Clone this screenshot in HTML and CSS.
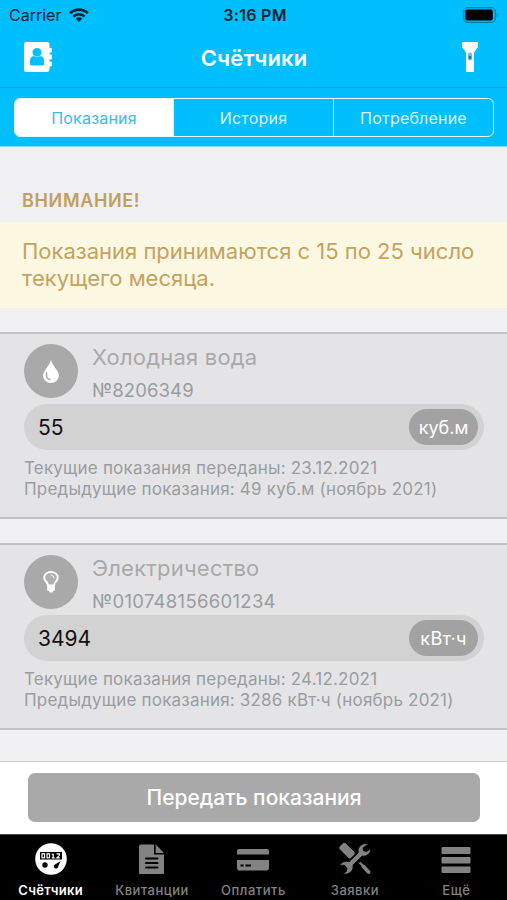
FILE: index.html
```html
<!DOCTYPE html>
<html lang="ru">
<head>
<meta charset="utf-8">
<meta name="viewport" content="width=device-width, initial-scale=1">
<title>Счётчики</title>
<link rel="stylesheet" href="styles.css">
</head>
<body>
<div class="app">
  <header class="top">
    <div class="status">
      <div class="carrier"><span>Carrier</span>
        <svg width="20" height="15" viewBox="0 0 20 15"><g fill="none" stroke="#07232d" stroke-width="2.700"><path d="M1.200 5.200a12.400 12.400 0 0 1 17.600 0"/><path d="M4.400 8.600a7.900 7.900 0 0 1 11.200 0"/></g><path fill="#07232d" d="M6.800 10.700a4.500 4.500 0 0 1 6.400 0L10 14z"/></svg>
      </div>
      <span class="time">3:16 PM</span>
      <svg class="battery" width="37" height="16" viewBox="0 0 37 16"><rect x=".7" y=".7" width="31.600" height="14.600" rx="4" fill="none" stroke="#087da3" stroke-width="1.300"/><rect x="2.400" y="2.600" width="27.400" height="10.800" rx="2" fill="#000"/><path d="M33.800 5.500q2.400 2.500 0 5z" fill="#087da3"/></svg>
    </div>
    <div class="nav">
      <svg width="29" height="30" viewBox="0 0 29 30"><path fill="#fff" fill-rule="evenodd" d="M2.500 0H23q2.500 0 2.500 2.500V6H27q1 0 1 1V9.500q0 1-1 1h-1.500v2H27q1 0 1 1V16.500q0 1-1 1h-1.500v2H27q1 0 1 1V23.500q0 1-1 1h-1.500v3Q25.500 30 23 30H2.500Q0 30 0 27.500v-25Q0 0 2.500 0zM13 6a4.600 4.600 0 0 0-3.200 7.900Q6 14.500 6 19v3q0 1.500 1.500 1.500h11Q20 23.500 20 22v-3q0-4.500-3.800-5.100A4.600 4.600 0 0 0 13 6z"/><path d="M9.300 13.600q3.700 3 7.400 0" fill="none" stroke="#9fe3fb" stroke-width=".8"/></svg>
      <h1>Счётчики</h1>
      <svg class="torch" width="16" height="30" viewBox="0 0 16 30"><path fill="#fff" d="M.8 0h14.400q.8 0 .8.800V4q0 1-.8 2l-2.500 3.500q-.7 1-.7 2V29q0 1-1 1H5q-1 0-1-1V11.500q0-1-.7-2L.8 6Q0 5 0 4V.8Q0 0 .8 0z"/><rect x="6" y="10.500" width="4" height="8" rx="2" fill="#66bde3"/><rect x="6.700" y="14" width="2.600" height="3" rx="1.200" fill="#087eb3"/></svg>
    </div>
    <div class="segments">
      <div class="seg active">Показания</div>
      <div class="seg">История</div>
      <div class="seg">Потребление</div>
    </div>
  </header>
  <main>
    <h2>ВНИМАНИЕ!</h2>
    <p class="notice">Показания принимаются с 15 по 25 число<br>текущего месяца.</p>
    <section class="card">
      <div class="head">
        <div class="round"><svg width="16" height="23" viewBox="0 0 16 23"><path fill="#fff" d="M8 0Q9 3.500 13 9q3 4 3 6.500A8 7.500 0 0 1 0 15.500Q0 13 3 9 7 3.500 8 0z"/><path d="M3.700 13Q2.500 18.500 7 19.500" fill="none" stroke="#a9a9a9" stroke-width="1.500" stroke-linecap="round"/></svg></div>
        <div class="names"><div class="name">Холодная вода</div><div class="num">№8206349</div></div>
      </div>
      <div class="field"><span>55</span><b class="unit">куб.м</b></div>
      <div class="info"><div>Текущие показания переданы: 23.12.2021</div><div>Предыдущие показания: 49 куб.м (ноябрь 2021)</div></div>
    </section>
    <section class="card">
      <div class="head">
        <div class="round"><svg width="16" height="22" viewBox="0 0 16 22"><path d="M5 14.500Q4.800 12.500 3 10.500 1.200 8.500 1.200 6.500a6.800 5.500 0 0 1 13.600 0Q14.800 8.500 13 10.500 11.200 12.500 11 14.500z" fill="#b0b0b0" stroke="#fff" stroke-width="1.900"/><path d="M4.200 14h7.600V19q0 1-1 1H10l-.5 1.500h-3L6 20h-.8q-1 0-1-1z" fill="#fff"/><path d="M8.500 4.200q2.500.3 2.500 2.500" fill="none" stroke="#fff" stroke-width="1" stroke-linecap="round"/></svg></div>
        <div class="names"><div class="name">Электричество</div><div class="num long">№010748156601234</div></div>
      </div>
      <div class="field"><span>3494</span><b class="unit wide">кВт·ч</b></div>
      <div class="info"><div>Текущие показания переданы: 24.12.2021</div><div>Предыдущие показания: 3286 кВт·ч (ноябрь 2021)</div></div>
    </section>
  </main>
  <div class="action"><div class="button">Передать показания</div></div>
  <nav class="tabs">
    <div class="tab on">
      <svg width="32" height="32" viewBox="0 0 32 32"><circle cx="16" cy="16" r="15.800" fill="#fff"/><rect x="5" y="9" width="22" height="7.500" fill="#000"/><g fill="none" stroke="#fff" stroke-width="1.200"><rect x="7" y="10.800" width="2.500" height="4"/><rect x="12" y="10.800" width="2.500" height="4"/><path d="M16.800 11.300h1.400v3.500m-1.500 0h3M21.500 10.800h2.800v1.800l-2.500 2.200h3"/></g><circle cx="10" cy="22" r="2.700"/><path d="m25.500 18.300-2.200 5a2.200 2.200 0 1 1-3-2z"/></svg>
      <span>Счётчики</span></div>
    <div class="tab">
      <svg width="32" height="32" viewBox="0 0 32 32"><path fill="#828282" d="M5 1.500h13v10h10V30q0 1-1 1H4q-1 0-1-1V3.500q0-2 2-2zM19.700 1.500 28 10h-8.300z"/><path stroke="#000" stroke-width="2" stroke-linecap="round" d="M10 15.500h11.500M10 20h11.500M10 24.500h11.500"/></svg>
      <span>Квитанции</span></div>
    <div class="tab">
      <svg width="32" height="32" viewBox="0 0 32 32"><path fill="#828282" d="M2 6h28q2 0 2 2v3.500H0V8q0-2 2-2zM0 17h32v8.500q0 2-2 2H2q-2 0-2-2z"/><path stroke="#000" stroke-width="2" d="M3.500 22.500h3.200M8.500 22.500h5.500"/></svg>
      <span>Оплатить</span></div>
    <div class="tab">
      <svg width="32" height="32" viewBox="0 0 32 32"><rect x="0" y="3.400" width="16" height="8.400" rx="2.400" transform="rotate(45 8 7.600)" fill="#828282"/><path fill="#828282" stroke="#000" stroke-width=".8" d="M29.500 1a7.700 7.700 0 0 0-10.300 9L10 18.800A7.700 7.700 0 0 0 .5 22.500l4.800-.3 2.700 3-.8 3.500-3.700 1.800a7.700 7.700 0 0 0 10.600-8.600L23 13.200A7.700 7.700 0 0 0 32 5.800l-4.500 2.700-3-.7-.5-3z"/><path d="M20.500 19.500l4 4" stroke="#828282" stroke-width="2.200"/><path d="M24.500 23.500l5 5.500" stroke="#828282" stroke-width="3.800" stroke-linecap="round"/></svg>
      <span>Заявки</span></div>
    <div class="tab">
      <svg width="32" height="32" viewBox="0 0 32 32"><g fill="#828282"><rect x="1.500" y="4" width="29" height="7" rx="1"/><rect x="1.500" y="14" width="29" height="6.500" rx="1"/><rect x="1.500" y="23.500" width="29" height="6.500" rx="1"/></g></svg>
      <span>Ещё</span></div>
  </nav>
</div>
</body>
</html>
```
FILE: styles.css
```css
* { box-sizing: border-box; margin: 0; padding: 0; }
body { width: 507px; height: 900px; overflow: hidden; font-family: Inter, "Liberation Sans", sans-serif; background: #efeff4; }
svg { display: block; flex: none; }
.app { height: 900px; display: flex; flex-direction: column; }
.top { height: 147px; background: #00bfff; flex: none; border-bottom: 1px solid #86d9f8; }
.status { height: 30px; display: grid; grid-template-columns: 1fr auto 1fr; align-items: center; padding: 0 7px 0 9px; }
.carrier { display: flex; align-items: center; gap: 8px; font-size: 16px; color: #07232d; }
.time { font-size: 16px; font-weight: 600; letter-spacing: .3px; color: #07232d; margin-left: 1px; }
.battery { justify-self: end; }
.nav { height: 58px; border-bottom: 1px solid #03a9df; display: grid; grid-template-columns: 1fr auto 1fr; align-items: center; padding: 0 29px 4px 24px; }
.torch { justify-self: end; }
h1 { font-size: 22px; font-weight: 600; line-height: 28px; color: #fff; padding-top: 3px; margin-left: 6px; letter-spacing: .15px; }
.segments { margin: 10px 13px 0 14px; height: 39px; border: 1.500px solid #e5f8ff; border-radius: 6px; display: grid; grid-template-columns: 158px 160px 1fr; overflow: hidden; }
.seg { color: #d9f5ff; display: flex; align-items: center; justify-content: center; font-size: 16px; letter-spacing: .2px; border-left: 1.500px solid #e5f8ff; }
.seg.active { background: #fff; color: #35bdf2; border: 0; }
main { flex: 1; min-height: 0; }
h2 { height: 75px; padding: 41px 22px 0; font-size: 18px; line-height: 25px; font-weight: 600; letter-spacing: .65px; color: #c2a05c; }
.notice { height: 86px; padding: 16px 22px 0; background: #fdf8e2; color: #c5a260; font-size: 22px; line-height: 27px; white-space: nowrap; }
.card { height: 187px; margin-top: 24px; border-top: 2px solid #c0c0c5; border-bottom: 2px solid #c0c0c5; background: #e4e4e6; padding: 10px 23px 0 24px; }
.head { display: flex; gap: 14px; height: 60px; }
.round { width: 54px; height: 54px; border-radius: 50%; background: #a9a9a9; display: flex; align-items: center; justify-content: center; }
.names { white-space: nowrap; }
.name { font-size: 22px; line-height: 27px; color: #a9a9a9; letter-spacing: .2px; }
.num { font-size: 18.500px; line-height: 24px; color: #999da0; margin-top: 7px; letter-spacing: .1px; }
.num.long { letter-spacing: .3px; }
.field { height: 46px; border-radius: 23px; background: #d2d2d3; display: flex; align-items: center; justify-content: space-between; padding: 0 6px 0 14px; font-size: 21px; color: #111; }
.unit { width: 69px; height: 36px; border-radius: 18px; background: #a2a2a2; color: #fff; font-size: 18px; font-weight: 400; display: flex; align-items: center; justify-content: center; }
.unit.wide { letter-spacing: .3px; }
.info { margin-top: 8px; font-size: 17px; line-height: 21px; color: #999da0; white-space: nowrap; letter-spacing: .2px; }
.action { height: 73px; flex: none; background: #fff; border-top: 1px solid #ccc; padding: 11px 27px 0 28px; }
.button { height: 49px; border-radius: 7px; background: #a9a9a9; color: #fff; display: flex; align-items: center; justify-content: center; font-size: 21px; font-weight: 500; }
.tabs { height: 66px; flex: none; background: #000; border-top: 1px solid #444; display: grid; grid-template-columns: repeat(5, 1fr); }
.tab { display: flex; flex-direction: column; align-items: center; padding-top: 8px; color: #828282; font-size: 13px; font-weight: 500; line-height: 17px; letter-spacing: .5px; }
.tab span { margin-top: 7px; }
.tab.on { color: #fff; font-weight: 600; letter-spacing: .3px; }
```
